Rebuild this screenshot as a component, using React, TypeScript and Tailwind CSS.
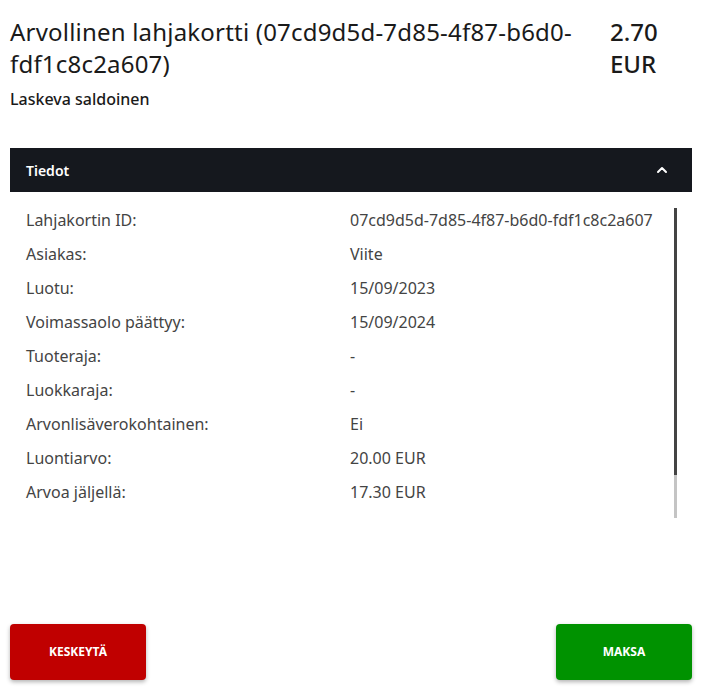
import { ChevronUp } from "lucide-react";

const rows = [
  { label: "Lahjakortin ID:", value: "07cd9d5d-7d85-4f87-b6d0-fdf1c8c2a607" },
  { label: "Asiakas:", value: "Viite" },
  { label: "Luotu:", value: "15/09/2023" },
  { label: "Voimassaolo päättyy:", value: "15/09/2024" },
  { label: "Tuoteraja:", value: "-" },
  { label: "Luokkaraja:", value: "-" },
  { label: "Arvonlisäverokohtainen:", value: "Ei" },
  { label: "Luontiarvo:", value: "20.00 EUR" },
  { label: "Arvoa jäljellä:", value: "17.30 EUR" },
  { label: "Viimeksi käytetty:", value: "15/09/2023" },
];

export default function App() {
  return (
    <div className="flex h-[691px] w-[705px] flex-col bg-white pl-[10px] pr-[13px] font-['Noto_Sans',sans-serif] text-[#1a1a1a]">
      <header className="flex pt-[16px]">
        <h1 className="flex-1 pr-[10px] text-[24px] leading-[32px] tracking-[0.2px]">
          Arvollinen lahjakortti (07cd9d5d-7d85-4f87-b6d0-fdf1c8c2a607)
        </h1>
        <div className="w-[82px] shrink-0 text-[24px] font-medium leading-[32px]">
          2.70 EUR
        </div>
      </header>
      <p className="pt-[7px] text-[16px] font-medium">Laskeva saldoinen</p>

      <section className="mt-[37px]">
        <div className="flex h-[44px] items-center justify-between bg-[#15181e] pl-[16px] pr-[22px] text-white">
          <span className="text-[14px] font-semibold">Tiedot</span>
          <ChevronUp size={16} strokeWidth={3} />
        </div>
        <div className="flex pt-[11px]">
          <div className="h-[316px] flex-1 overflow-hidden pl-[16px]">
            {rows.map((row) => (
              <div key={row.label} className="flex h-[34px] items-center text-[16px] text-[#444]">
                <span className="w-[324px] shrink-0">{row.label}</span>
                <span>{row.value}</span>
              </div>
            ))}
          </div>
          <div className="mr-[15px] mt-[5px] flex h-[310px] w-[3px] flex-col bg-[#c4c4c4]">
            <div className="h-[267px] bg-[#444]" />
          </div>
        </div>
      </section>

      <div className="mt-auto flex justify-between pb-[11px]">
        <button className="h-[56px] w-[136px] rounded-[4px] bg-[#c00000] text-[12px] font-bold text-white shadow-[0_2px_4px_rgba(0,0,0,0.3)]">
          KESKEYTÄ
        </button>
        <button className="h-[56px] w-[136px] rounded-[4px] bg-[#009200] text-[12px] font-bold text-white shadow-[0_2px_4px_rgba(0,0,0,0.3)]">
          MAKSA
        </button>
      </div>
    </div>
  );
}
